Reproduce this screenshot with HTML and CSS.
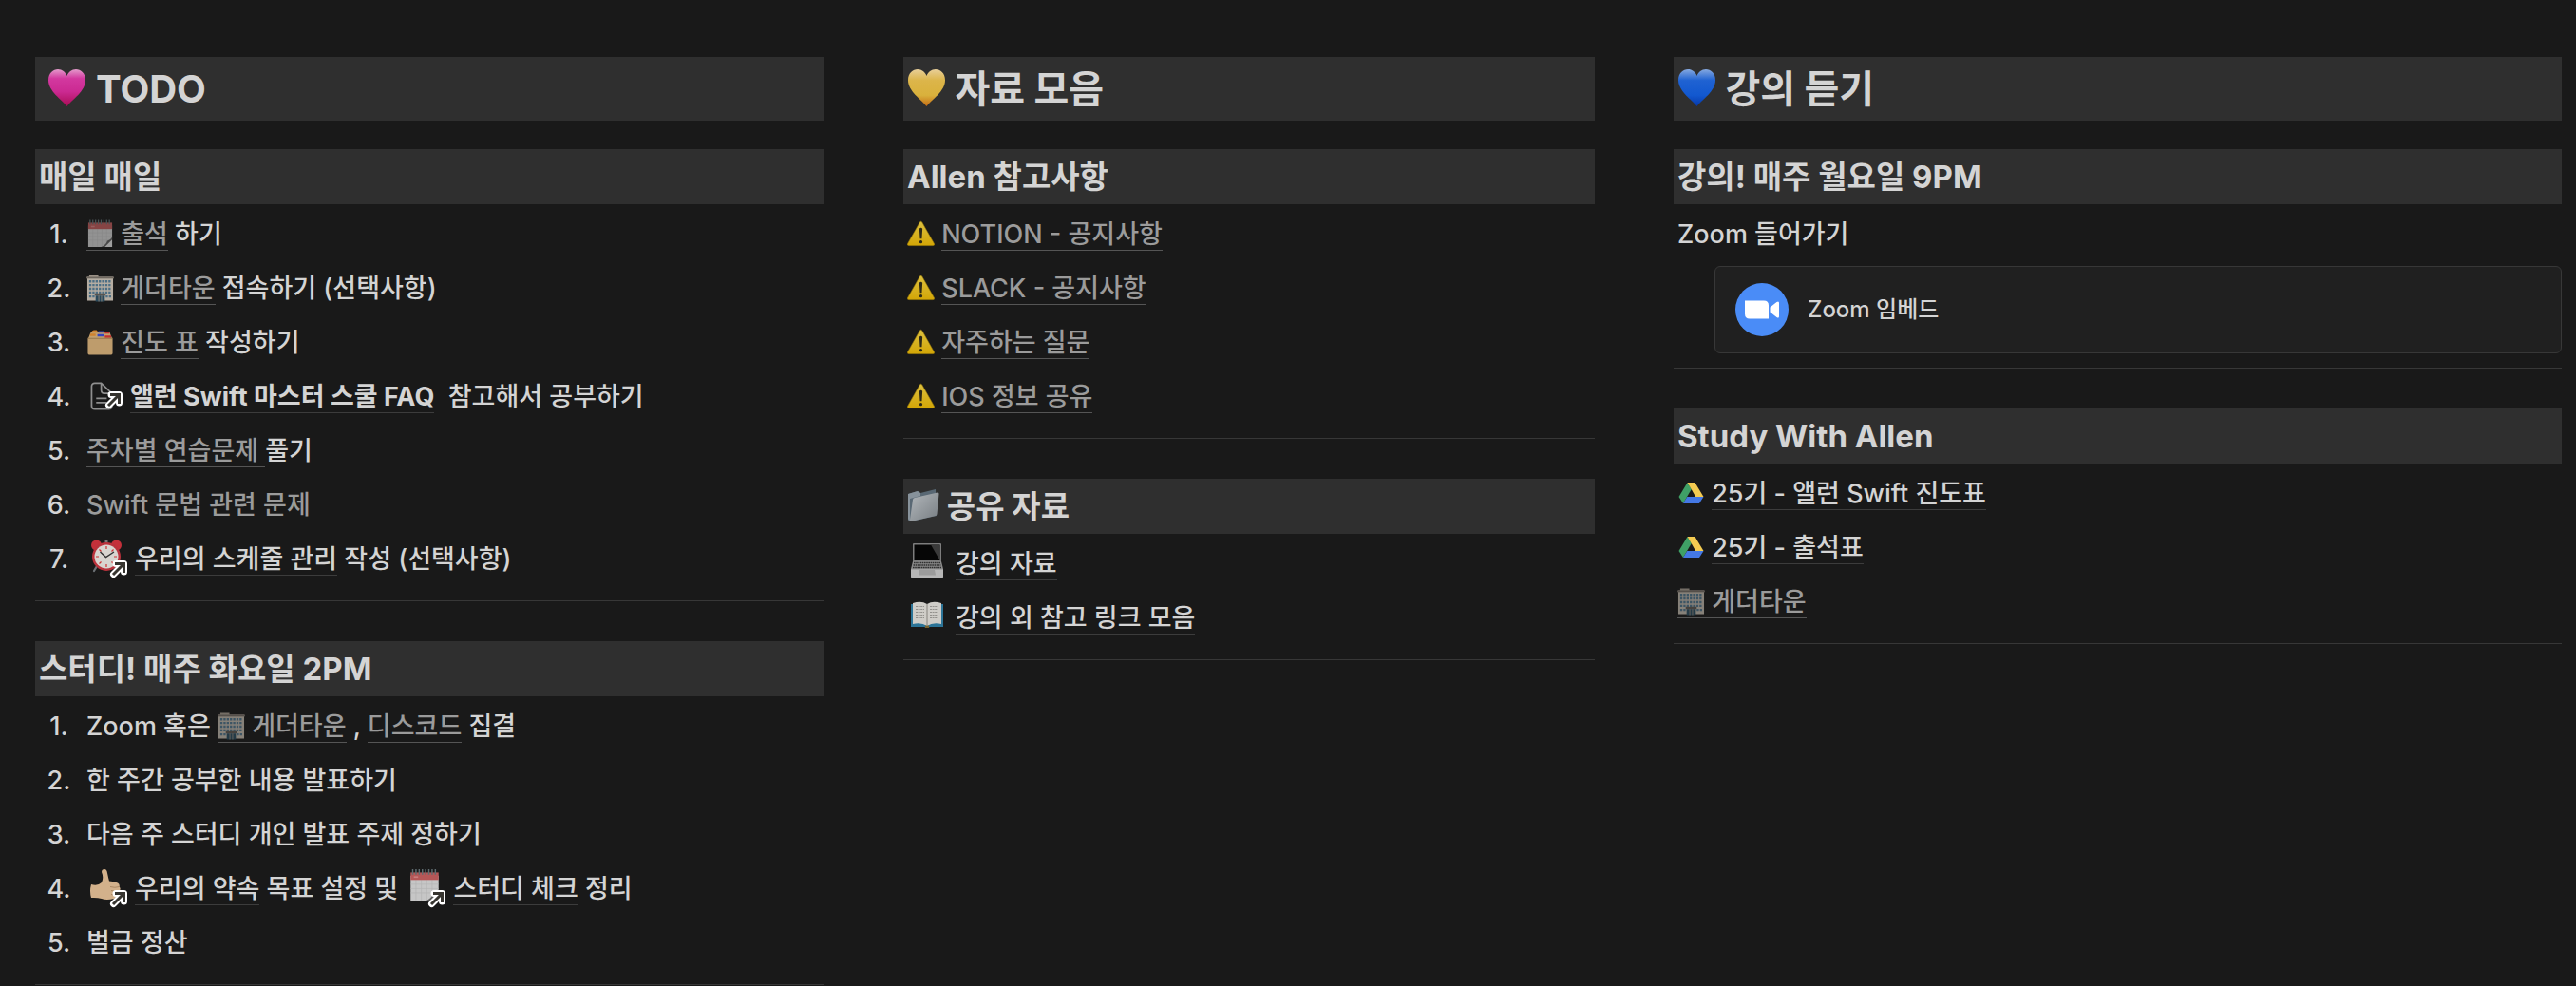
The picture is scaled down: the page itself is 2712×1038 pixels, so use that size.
FILE: index.html
```html
<!DOCTYPE html>
<html lang="ko">
<head>
  <meta charset="UTF-8">
  <title>Allen Swift 스터디</title>
  <link rel="stylesheet" href="styles.css">
</head>
<body>

<!-- Icon sprite -->
<svg class="sprite" aria-hidden="true">
  <defs>
    <linearGradient id="pink" x1="0" y1="0" x2="0" y2="1">
      <stop offset="0" stop-color="#e39bcb"/>
      <stop offset="0.25" stop-color="#d3389f"/>
      <stop offset="0.6" stop-color="#cb2a92"/>
      <stop offset="1" stop-color="#a90c55"/>
    </linearGradient>
    <linearGradient id="yellow" x1="0" y1="0" x2="0" y2="1">
      <stop offset="0" stop-color="#e8cf9a"/>
      <stop offset="0.3" stop-color="#dcb54a"/>
      <stop offset="0.7" stop-color="#d9b13c"/>
      <stop offset="1" stop-color="#c46a14"/>
    </linearGradient>
    <linearGradient id="blue" x1="0" y1="0" x2="0" y2="1">
      <stop offset="0" stop-color="#86a9e0"/>
      <stop offset="0.3" stop-color="#1f62d2"/>
      <stop offset="0.7" stop-color="#1258cf"/>
      <stop offset="1" stop-color="#0637a8"/>
    </linearGradient>
    <linearGradient id="steel" x1="0" y1="0" x2="1" y2="1">
      <stop offset="0" stop-color="#b3b8bc"/>
      <stop offset="1" stop-color="#777d82"/>
    </linearGradient>
    <linearGradient id="warn" x1="0" y1="0" x2="0" y2="1">
      <stop offset="0" stop-color="#dcc040"/>
      <stop offset="1" stop-color="#d3a606"/>
    </linearGradient>
  </defs>

  <symbol id="heart" viewBox="0 0 41 41">
    <path d="M20.500 40C15 33 1 24 1 12.500C1 5 6 1 11 1C15.500 1 19 4 20.500 8C22 4 25.500 1 30 1C35 1 40 5 40 12.500C40 24 26 33 20.500 40Z"/>
  </symbol>

  <symbol id="notepad" viewBox="0 0 30 30">
    <path fill="#c6c6c6" d="M2 6H28V21L20 29.500H2Z"/>
    <path stroke="#b4b4b4" stroke-width=".6" d="M2 14H28M2 18H28M2 22H26M7 10V29M12 10V29M17 10V29M22 10V26"/>
    <path fill="#b55757" d="M2 3H28V10H2Z"/>
    <path fill="#c97c7c" d="M5 6.500H9V8H5Z"/>
    <path fill="#5c5c5c" d="M16 29.500Q22 27 22.500 23Q26 22.500 28 19V29.500Z"/>
    <path fill="#d8d8d8" d="M20 29.500L28 21.500V29.500Z"/>
    <path stroke="#5f6c70" stroke-width="1.300" d="M4 0V5M7 0V5M10 0V5M13 0V5M16 0V5M19 0V5M22 0V5M25 0V5"/>
  </symbol>

  <symbol id="building" viewBox="0 0 30 30">
    <path fill="#9b9186" d="M3 1H13V4H3Z"/>
    <path fill="#b5ada2" d="M1 3H29V29H1Z"/>
    <path fill="#6e675f" d="M0 3H30V5H0Z"/>
    <path stroke="#4d6f85" stroke-width="2.400" stroke-dasharray="2.400 1.100" d="M3 8H27.500M3 12H27.500M3 16H27.500M3 20H27.500"/>
    <path stroke="#4d6f85" stroke-width="2.400" stroke-dasharray="2.400 1.100" d="M3 24.500H9M21 24.500H27.500"/>
    <path fill="#5a544e" d="M9 21H21V23.500H9Z"/>
    <path fill="#29485a" d="M10 23.500H20V30H10Z"/>
    <path stroke="#8b847b" d="M13.500 23.500V30M16.500 23.500V30"/>
  </symbol>

  <symbol id="dividers" viewBox="0 0 30 30">
    <path fill="#c2a06f" d="M5 4H25L28 11H2Z"/>
    <path fill="#d0822f" d="M6 3L8 2H11L12 3V5H6ZM4 6H10V8.500H4Z"/>
    <path fill="#3444c0" d="M13 3H19V5H13ZM12 6.500H19V9H12Z"/>
    <path fill="#c23232" d="M20 4H25V6H20ZM20 8H27V10.500H20Z"/>
    <path fill="#be9c6c" d="M1.500 11H28.500V27Q28.500 29 27 29H3Q1.500 29 1.500 27Z"/>
    <path stroke="#a1804f" stroke-width=".8" d="M1.500 11H28.500"/>
  </symbol>

  <symbol id="page" viewBox="0 0 30 31">
    <path fill="none" stroke="#8f8f8f" stroke-width="1.800" stroke-linejoin="round" d="M12 1.500H5Q1.500 1.500 1.500 5V26Q1.500 29.500 5 29.500H20Q23.500 29.500 23.500 26V12.500ZM12 1.500V9Q12 12.500 15.500 12.500H23.500M6.500 18H18M6.500 22.500H18"/>
  </symbol>

  <symbol id="clock" viewBox="0 0 34 34">
    <path stroke="#6d7276" stroke-width="2.200" stroke-linecap="round" d="M7 28L4 33M26 29L29 33"/>
    <path stroke="#777" stroke-width="3" d="M17 0V4"/>
    <circle cx="6.500" cy="6" r="5.500" fill="#c4303a"/>
    <circle cx="27.500" cy="6" r="5.500" fill="#c4303a"/>
    <circle cx="17" cy="18" r="15" fill="#b9323c"/>
    <circle cx="17" cy="18" r="12.500" fill="#d8d5d0"/>
    <path stroke="#c33" stroke-width="1.200" d="M17 7V10M17 26V29M6 18H9M25 18H28M9.500 10.500L11.500 12.500M24.500 10.500L22.500 12.500M9.500 25.500L11.500 23.500M24.500 25.500L22.500 23.500"/>
    <path fill="none" stroke="#333" stroke-width="1.400" d="M10.500 13L16.500 18.500L25 13"/>
  </symbol>

  <symbol id="thumb" viewBox="0 0 34 34">
    <path fill="#d3b18b" d="M12 14Q14.500 9 12 3Q12 0 15 0Q17.500 0 18 4Q19 9 20 12.500Q26 13 29 14.500Q31.500 16 30.500 18.500Q32.500 20 31 22.500Q32 25 29.500 26.500Q29 30 25 31Q17 33 12 31Q7 29.500 1 30Q-1 23 1 16Q8 18 12 14Z"/>
    <path fill="none" stroke="#ac8862" d="M21 18.500Q26 20 30.500 18.500M22 22.500Q27 24 31 22.500M22 26.500Q26 27.500 29.500 26.500"/>
  </symbol>

  <symbol id="warning" viewBox="0 0 30 30">
    <path fill="url(#warn)" stroke="#a98508" stroke-width=".6" d="M13.800 2.500Q15 1 16.200 2.500L29.500 26Q30 28 28 28H2Q0 28 .5 26Z"/>
    <path fill="#2c2817" d="M13.300 9.500Q15 7.500 16.700 9.500L16 20.500H14Z"/>
    <circle cx="15" cy="24" r="1.700" fill="#2c2817"/>
  </symbol>

  <symbol id="folder" viewBox="0 0 34 34">
    <path fill="#596874" d="M1 5L11 2L14 4L30 0L31 28L4 34Q1 34 1 31Z"/>
    <path fill="#87929b" d="M1 5L11 2L14 4L14 7L3 10V33Q1 33 1 31Z"/>
    <path fill="url(#steel)" d="M6 11Q6 9.500 8 9L32 3.500Q33.500 3 33.500 5L31.500 26Q31.500 27.500 30 28L4 34Q2.500 34 3 32Z"/>
  </symbol>

  <symbol id="laptop" viewBox="0 0 34 36">
    <path fill="#7d7d7d" d="M3 0H31Q32 0 32 1V19H2V1Q2 0 3 0Z"/>
    <path fill="#060606" d="M3.500 1.500H30.500V18H3.500Z"/>
    <path fill="#3a3a3a" d="M21 1.500H30.500V18Z"/>
    <path fill="#8b8b8b" d="M2 19H32L34 27V35Q34 36 33 36H1Q0 36 0 35V27Z"/>
    <path stroke="#2f2f2f" stroke-width="1.500" stroke-dasharray="1.600 .6" d="M3 20.500H31M2.500 23H31.500M2 25.500H32"/>
    <path fill="#b7b7b7" d="M0 27.500H34V35Q34 36 33 36H1Q0 36 0 35Z"/>
    <path fill="#9c9c9c" d="M9 28H25L26 33.500H8Z"/>
  </symbol>

  <symbol id="book" viewBox="0 0 34 34">
    <path fill="#2c7497" d="M0 6H34V30H20Q17 32 14 30H0Z"/>
    <path fill="#cfcdc8" d="M2 5Q11 2 17 6Q23 2 32 5V27Q23 25 17 29Q11 25 2 27Z"/>
    <path stroke="#8c8a86" stroke-width=".9" stroke-dasharray="2 .6" d="M5 8.500H14M5 11.500H14M5 14.500H14M5 17.500H14M5 20.500H14M20 8.500H29M20 11.500H29M20 14.500H29M20 17.500H29M20 20.500H29"/>
    <path stroke="#85827d" d="M17 6V28"/>
    <path fill="#77632f" d="M15 28.500H19V31H15Z"/>
  </symbol>

  <symbol id="drive" viewBox="0 0 26 24">
    <path fill="#3fa066" d="M9 1L0 16L4.500 23L13.300 8Z"/>
    <path fill="#f4cb51" d="M9 1H17L26 16H17.700Z"/>
    <path fill="#4478e4" d="M8.700 16H26L21.500 23H4.500Z"/>
  </symbol>

  <symbol id="zoom" viewBox="0 0 56 56">
    <circle cx="28" cy="28" r="28" fill="#4a8cf7"/>
    <path fill="#fff" d="M10 18.500H30Q35 18.500 35 23.500V37.500H15Q10 37.500 10 32.500ZM36.500 25.500L43.500 20Q46 18.500 46 21V35Q46 37.500 43.500 36L36.500 30.500Z"/>
  </symbol>

  <symbol id="arrow" viewBox="0 0 20 20">
    <path fill="none" stroke="#fff" stroke-width="7" stroke-linejoin="round" stroke-linecap="round" d="M7 4.500H15.500V13M15 5L4.500 15.500"/>
    <path fill="none" stroke="#373530" stroke-width="3" d="M6 4.500H15.500V14M15 5L4 16"/>
  </symbol>
</svg>

<main class="board">

  <!-- TODO -->
  <section class="column column-todo">
    <h1>&nbsp;<svg class="icon-heart pink"><use href="#heart"/></svg> TODO</h1>

    <h2>매일 매일</h2>
    <ol>
      <li><a class="link" href="#"><svg class="icon dim"><use href="#notepad"/></svg> 출석</a> 하기</li>
      <li><svg class="icon"><use href="#building"/></svg> <a class="link" href="#">게더타운</a> 접속하기 (선택사항)</li>
      <li><svg class="icon"><use href="#dividers"/></svg> <a class="link" href="#">진도 표</a> 작성하기</li>
      <li><span class="ref ref-page"><svg class="icon"><use href="#page"/></svg><svg class="ref-arrow"><use href="#arrow"/></svg></span><a class="mention strong" href="#">앨런 Swift 마스터 스쿨 FAQ</a>&nbsp; 참고해서 공부하기</li>
      <li><a class="link" href="#">주차별 연습문제&nbsp;</a>풀기</li>
      <li><a class="link" href="#">Swift 문법 관련 문제</a></li>
      <li><span class="ref"><svg class="icon-big"><use href="#clock"/></svg><svg class="ref-arrow"><use href="#arrow"/></svg></span><a class="mention" href="#">우리의 스케줄 관리</a> 작성 (선택사항)</li>
    </ol>
    <hr>

    <h2>스터디! 매주 화요일 2PM</h2>
    <ol>
      <li>Zoom 혹은 <a class="link" href="#"><svg class="icon dim"><use href="#building"/></svg> 게더타운</a> , <a class="link" href="#">디스코드</a> 집결</li>
      <li>한 주간 공부한 내용 발표하기</li>
      <li>다음 주 스터디 개인 발표 주제 정하기</li>
      <li><span class="ref"><svg class="icon-big"><use href="#thumb"/></svg><svg class="ref-arrow"><use href="#arrow"/></svg></span><a class="mention" href="#">우리의 약속</a> 목표 설정 및 <span class="ref"><svg class="icon-big"><use href="#notepad"/></svg><svg class="ref-arrow"><use href="#arrow"/></svg></span><a class="mention" href="#">스터디 체크</a> 정리</li>
      <li>벌금 정산</li>
    </ol>
    <hr>
  </section>

  <!-- 자료 모음 -->
  <section class="column column-docs">
    <h1><svg class="icon-heart yellow"><use href="#heart"/></svg> 자료 모음</h1>

    <h2>Allen 참고사항</h2>
    <p><svg class="icon"><use href="#warning"/></svg> <a class="link" href="#">NOTION - 공지사항</a></p>
    <p><svg class="icon"><use href="#warning"/></svg> <a class="link" href="#">SLACK - 공지사항</a></p>
    <p><svg class="icon"><use href="#warning"/></svg> <a class="link" href="#">자주하는 질문</a></p>
    <p><svg class="icon"><use href="#warning"/></svg> <a class="link" href="#">IOS 정보 공유</a></p>
    <hr>

    <h2><svg class="icon-big"><use href="#folder"/></svg> 공유 자료</h2>
    <p><span class="ref"><svg class="icon-big"><use href="#laptop"/></svg></span><a class="mention" href="#">강의 자료</a></p>
    <p><span class="ref"><svg class="icon-big"><use href="#book"/></svg></span><a class="mention" href="#">강의 외 참고 링크 모음</a></p>
    <hr>
  </section>

  <!-- 강의 듣기 -->
  <section class="column column-class">
    <h1><svg class="icon-heart blue"><use href="#heart"/></svg> 강의 듣기</h1>

    <h2>강의! 매주 월요일 9PM</h2>
    <p>Zoom 들어가기</p>
    <a class="card" href="#">
      <svg class="card-icon"><use href="#zoom"/></svg>
      <span>Zoom 임베드</span>
    </a>
    <hr>

    <h2>Study With Allen</h2>
    <p><svg class="icon drive"><use href="#drive"/></svg> <a class="mention" href="#">25기 - 앨런 Swift 진도표</a></p>
    <p><svg class="icon drive"><use href="#drive"/></svg> <a class="mention" href="#">25기 - 출석표</a></p>
    <p><a class="link" href="#"><svg class="icon dim"><use href="#building"/></svg> 게더타운</a></p>
    <hr>
  </section>

</main>

</body>
</html>
```

FILE: styles.css
```css
body {
  margin: 0;
  background: #191919;
  color: #d4d4d4;
  font-family: Inter, "Noto Sans CJK KR", sans-serif;
  font-size: 27px;
  font-weight: 500;
  line-height: 57px;
}
.sprite {
  position: absolute;
  width: 0;
  height: 0;
}

/* Layout */
.board {
  display: flex;
  gap: 83px;
  padding: 60px 15px 0 37px;
}
.column {
  min-width: 0;
}
.column-todo {
  flex: 831 1 0;
}
.column-docs {
  flex: 728 1 0;
}
.column-class {
  flex: 935 1 0;
}

/* Headings */
h1, h2 {
  margin: 0;
  padding: 0 4px;
  background: #2f2f2f;
  font-weight: 700;
}
h1 {
  margin-bottom: 30px;
  font-size: 40px;
  line-height: 67px;
}
h2 {
  margin-bottom: 3px;
  font-size: 33px;
  line-height: 58px;
}
hr {
  margin: 15px 0 42px;
  border: none;
  border-top: 1px solid #373737;
}
hr:last-child {
  margin-bottom: 0;
}

/* Text rows */
p {
  margin: 0;
  padding: 0 4px;
}
ol {
  margin: 0;
  padding: 0 0 0 12px;
  list-style: none;
  counter-reset: item;
}
li::before {
  counter-increment: item;
  content: counter(item) ".";
  display: inline-block;
  width: 26px;
  margin-right: 16px;
  text-align: center;
}
.link {
  color: #9b9b9b;
  text-decoration: none;
  border-bottom: 1px solid #555;
}
.mention {
  color: #d4d4d4;
  text-decoration: none;
  border-bottom: 1px solid #3c3c3c;
}
.strong {
  font-weight: 700;
}

/* Icons */
.icon {
  width: 29px;
  height: 30px;
  vertical-align: -5px;
}
.icon-big {
  width: 34px;
  height: 36px;
  vertical-align: -5px;
}
.icon-heart {
  width: 41px;
  height: 41px;
  vertical-align: -5px;
}
.drive {
  height: 24px;
  vertical-align: -2px;
}
.dim {
  opacity: 0.7;
}
.pink {
  fill: url(#pink);
}
.yellow {
  fill: url(#yellow);
}
.blue {
  fill: url(#blue);
}
.ref {
  position: relative;
  margin: 0 13px 0 4px;
}
.ref-arrow {
  position: absolute;
  right: -6px;
  bottom: -4px;
  width: 20px;
  height: 20px;
}
.ref-page .ref-arrow {
  bottom: 3px;
}

/* Zoom embed */
.card {
  display: flex;
  align-items: center;
  gap: 20px;
  margin: 5px 0 15px 43px;
  padding: 17px 21px;
  border: 1px solid #373737;
  border-radius: 6px;
  background: #202020;
  color: #d4d4d4;
  font-size: 24px;
  line-height: 56px;
  text-decoration: none;
}
.card-icon {
  width: 56px;
  height: 56px;
}
```
